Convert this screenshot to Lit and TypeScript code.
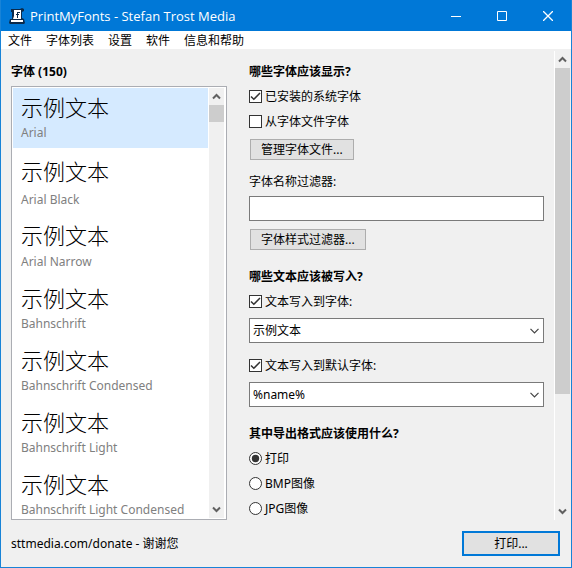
import { LitElement, html, css } from "lit";
import { customElement, property, state } from "lit/decorators.js";
import { classMap } from "lit/directives/class-map.js";

interface FontItem {
  name: string;
  metrics: "compact" | "tall" | "medium" | "regular";
}

const MENU = ["文件", "字体列表", "设置", "软件", "信息和帮助"];

const FONTS: FontItem[] = [
  { name: "Arial", metrics: "compact" },
  { name: "Arial Black", metrics: "tall" },
  { name: "Arial Narrow", metrics: "medium" },
  { name: "Bahnschrift", metrics: "regular" },
  { name: "Bahnschrift Condensed", metrics: "regular" },
  { name: "Bahnschrift Light", metrics: "regular" },
  { name: "Bahnschrift Light Condensed", metrics: "regular" },
];

const FORMATS = ["打印", "BMP图像", "JPG图像"];

/* Vertical scroll bar with arrow buttons. */
@customElement("scroll-bar")
export class ScrollBar extends LitElement {
  @property({ type: Boolean }) long = false;

  static styles = css`
    :host {
      display: flex;
      flex-direction: column;
      flex: none;
      width: 15px;
      background: #f0f0f0;
    }
    button {
      display: grid;
      place-items: center;
      flex: none;
      height: 17px;
      padding: 0;
      border: 0;
      background: none;
    }
    svg {
      display: block;
      width: 9px;
      height: 7px;
      fill: none;
      stroke: #606060;
      stroke-width: 2;
    }
    .track {
      flex: 1;
      min-height: 0;
    }
    .thumb {
      height: 17px;
      background: #cdcdcd;
    }
    .thumb.long {
      height: 75%;
    }
  `;

  render() {
    return html`
      <button aria-label="向上滚动"><svg viewBox="0 0 9 7"><path d="M1 5.5 4.5 2 8 5.5" /></svg></button>
      <div class="track"><div class=${classMap({ thumb: true, long: this.long })}></div></div>
      <button aria-label="向下滚动"><svg viewBox="0 0 9 7"><path d="M1 1.5 4.5 5 8 1.5" /></svg></button>
    `;
  }
}

@customElement("app-root")
export class AppRoot extends LitElement {
  @state() private selected = 0;

  static styles = css`
    :host {
      display: flex;
      flex-direction: column;
      box-sizing: border-box;
      height: 100vh;
      border: 1px solid #1883d7;
      border-top: 0;
      background: #f0f0f0;
      color: #000;
      font: 12px/18px "Noto Sans", "Noto Sans CJK SC", sans-serif;
    }
    * {
      box-sizing: border-box;
    }
    button,
    input,
    select {
      font: inherit;
      color: inherit;
      margin: 0;
    }
    .titlebar {
      display: flex;
      align-items: center;
      flex: none;
      height: 31px;
      padding-left: 8px;
      background: #0078d7;
      color: #fff;
    }
    .logo {
      width: 16px;
      height: 16px;
      margin-right: 5px;
    }
    .title {
      flex: 1;
      margin: 0;
      font-family: "Open Sans", "Noto Sans", sans-serif;
      font-size: 13px;
      font-weight: 400;
    }
    .caption {
      display: grid;
      place-items: center;
      width: 46px;
      height: 31px;
      padding: 0;
      border: 0;
      background: none;
    }
    .caption svg {
      width: 10px;
      height: 10px;
      fill: none;
      stroke: #fff;
    }
    .caption .cross {
      stroke-width: 1.3;
    }
    .menu {
      display: flex;
      flex: none;
      gap: 14px;
      height: 18px;
      padding: 1px 0 0 7px;
      background: #fff;
    }
    .menu button {
      padding: 0;
      border: 0;
      background: none;
    }
    .body {
      display: flex;
      flex: 1;
      gap: 22px;
      min-height: 0;
      padding-left: 10px;
    }
    .left {
      display: flex;
      flex-direction: column;
      flex: 0 0 216px;
      padding-top: 14px;
    }
    h2 {
      margin: 0;
      font-size: 12px;
      line-height: 18px;
      font-weight: 700;
    }
    .listbox {
      display: flex;
      flex: 1;
      gap: 1px;
      min-height: 0;
      margin-top: 5px;
      padding: 1px 2px 1px 1px;
      border: 1px solid #abadb3;
      background: #fff;
    }
    .fonts {
      flex: 1;
      min-width: 0;
      margin: 0;
      padding: 0;
      overflow: hidden;
      list-style: none;
    }
    .font {
      display: flex;
      flex-direction: column;
      justify-content: flex-end;
      height: 62px;
      padding: 0 8px 6px;
      white-space: nowrap;
    }
    .sample {
      font-size: 22px;
      line-height: 34px;
      font-weight: 300;
    }
    .name {
      color: #808080;
      line-height: 18px;
    }
    .font.compact {
      height: 60px;
    }
    .font.tall {
      height: 67px;
    }
    .tall .sample {
      line-height: 40px;
    }
    .medium .sample {
      line-height: 36px;
    }
    .font.selected {
      background: #d5eaff;
    }
    .right {
      display: flex;
      flex: 1;
      min-width: 0;
      padding: 2px 1px 0 0;
    }
    .form {
      flex: 1;
      min-width: 0;
      padding: 12px 10px 0 0;
      overflow: hidden;
      border-right: 1px solid #fff;
    }
    .group {
      display: flex;
      flex-direction: column;
      align-items: flex-start;
      margin-bottom: 18px;
    }
    .choice {
      display: flex;
      align-items: center;
      gap: 3px;
      height: 18px;
      margin-top: 7px;
    }
    .mark {
      display: grid;
      width: 13px;
      height: 13px;
      margin-bottom: 1px;
    }
    .mark > * {
      grid-area: 1 / 1;
    }
    .mark input {
      appearance: none;
      width: 13px;
      height: 13px;
      border: 1px solid #333;
      background: #fff;
    }
    .mark input[type="radio"] {
      border-radius: 50%;
    }
    .mark svg {
      z-index: 1;
      width: 13px;
      height: 13px;
      fill: none;
      stroke: #333;
      pointer-events: none;
      visibility: hidden;
    }
    .mark input:checked + svg {
      visibility: visible;
    }
    .mark .dot {
      fill: #333;
      stroke: none;
    }
    .push {
      height: 21px;
      margin: 8px 0 0 1px;
      padding: 0 10px;
      border: 1px solid #adadad;
      background: #e1e1e1;
      line-height: 18px;
    }
    .caption-label {
      margin-top: 13px;
    }
    .field {
      width: 100%;
      height: 25px;
      margin-top: 5px;
      padding: 0 3px;
      border: 1px solid #7a7a7a;
      border-radius: 0;
      background: #fff;
    }
    .combo {
      display: grid;
      align-items: center;
      width: 100%;
      margin: 7px 0;
    }
    .combo:last-child {
      margin-bottom: 0;
    }
    .combo > * {
      grid-area: 1 / 1;
    }
    .combo .field {
      appearance: none;
      margin: 0;
    }
    .combo svg {
      justify-self: end;
      width: 9px;
      height: 6px;
      margin-right: 5px;
      fill: none;
      stroke: #444;
      stroke-width: 1.2;
      pointer-events: none;
    }
    .footer {
      display: flex;
      flex: none;
      align-items: center;
      justify-content: space-between;
      height: 47px;
      padding: 0 11px 0 10px;
    }
    .footer a {
      color: inherit;
      text-decoration: none;
    }
    .primary {
      width: 98px;
      height: 25px;
      padding: 0;
      border: 2px solid #0078d7;
      background: #e1e1e1;
    }
  `;

  private check(label: string, checked: boolean) {
    return html`<label class="choice">
      <span class="mark">
        <input type="checkbox" ?checked=${checked} />
        <svg viewBox="0 0 13 13"><path stroke-width="1.5" d="M2 6.5 4.8 9.3 11 3" /></svg>
      </span>
      ${label}
    </label>`;
  }

  private radio(label: string, checked: boolean) {
    return html`<label class="choice">
      <span class="mark">
        <input type="radio" name="format" ?checked=${checked} />
        <svg viewBox="0 0 13 13"><circle class="dot" cx="6.5" cy="6.5" r="3.7" /></svg>
      </span>
      ${label}
    </label>`;
  }

  private combo(label: string, value: string) {
    return html`<div class="combo">
      <select class="field" aria-label=${label}>
        <option>${value}</option>
      </select>
      <svg viewBox="0 0 9 6"><path d="M.5 .8 4.5 4.8 8.5 .8" /></svg>
    </div>`;
  }

  render() {
    return html`
      <header class="titlebar">
        <svg class="logo" viewBox="0 0 16 16">
          <path fill="#0b2a4a" d="M2 1h9l2-1 2 1v2l-2 1v6l2 1 1 4-1 1H1l-1-1 1-4h2V4H2z" />
          <path fill="#fff" d="M5 2h7v9H4l1-3zM2 12h12v2H2z" />
          <path fill="#0b2a4a" d="M8 4h3v1H9v1h1v1H9v3H8V7H7V6h1z" />
        </svg>
        <h1 class="title">PrintMyFonts - Stefan Trost Media</h1>
        <button class="caption" aria-label="最小化"><svg viewBox="0 0 10 10"><path d="M0 5.5h10" /></svg></button>
        <button class="caption" aria-label="最大化"><svg viewBox="0 0 10 10"><path d="M.5 .5h9v9h-9z" /></svg></button>
        <button class="caption" aria-label="关闭"><svg viewBox="0 0 10 10"><path class="cross" d="M0 0 10 10M10 0 0 10" /></svg></button>
      </header>
      <nav class="menu">${MENU.map((m) => html`<button>${m}</button>`)}</nav>
      <main class="body">
        <section class="left">
          <h2>字体 (150)</h2>
          <div class="listbox">
            <ul class="fonts" role="listbox" aria-label="字体">
              ${FONTS.map(
                (f, i) => html`<li
                  class=${classMap({ font: true, [f.metrics]: true, selected: i === this.selected })}
                  role="option"
                  aria-selected=${i === this.selected}
                  @click=${() => (this.selected = i)}
                >
                  <span class="sample">示例文本</span>
                  <span class="name">${f.name}</span>
                </li>`
              )}
            </ul>
            <scroll-bar></scroll-bar>
          </div>
        </section>
        <section class="right">
          <div class="form">
            <div class="group">
              <h2>哪些字体应该显示?</h2>
              ${this.check("已安装的系统字体", true)} ${this.check("从字体文件字体", false)}
              <button class="push">管理字体文件...</button>
              <label class="caption-label" for="filter">字体名称过滤器:</label>
              <input class="field" id="filter" type="text" />
              <button class="push">字体样式过滤器...</button>
            </div>
            <div class="group">
              <h2>哪些文本应该被写入?</h2>
              ${this.check("文本写入到字体:", true)} ${this.combo("文本写入到字体", "示例文本")}
              ${this.check("文本写入到默认字体:", true)} ${this.combo("文本写入到默认字体", "%name%")}
            </div>
            <div class="group">
              <h2>其中导出格式应该使用什么?</h2>
              ${FORMATS.map((f, i) => this.radio(f, i === 0))}
            </div>
          </div>
          <scroll-bar long></scroll-bar>
        </section>
      </main>
      <footer class="footer">
        <a href="https://sttmedia.com/donate">sttmedia.com/donate - 谢谢您</a>
        <button class="primary">打印...</button>
      </footer>
    `;
  }
}
